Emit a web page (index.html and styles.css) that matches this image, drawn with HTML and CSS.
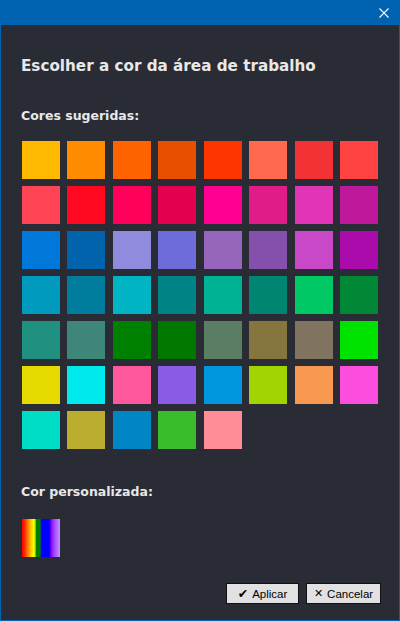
FILE: index.html
```html
<!DOCTYPE html>
<html lang="pt">
<head>
<meta charset="utf-8">
<title>Escolher a cor</title>
<link rel="stylesheet" href="styles.css">
</head>
<body>
<div class="window">
  <div class="titlebar">
    <button class="close" aria-label="Fechar">
      <svg width="10" height="10" viewBox="0 0 10 10"><path d="M0.5 0.5 L9.5 9.5 M9.5 0.5 L0.5 9.5" stroke="#fff" stroke-width="1.1" fill="none"/></svg>
    </button>
  </div>
  <div class="content">
    <h1 class="heading">Escolher a cor da área de trabalho</h1>
    <h2 class="label">Cores sugeridas:</h2>
    <div class="grid">
      <span class="sw" style="background:#FFB900"></span>
      <span class="sw" style="background:#FF8C00"></span>
      <span class="sw" style="background:#FF6300"></span>
      <span class="sw" style="background:#E85000"></span>
      <span class="sw" style="background:#FF3500"></span>
      <span class="sw" style="background:#FF6A4F"></span>
      <span class="sw" style="background:#F23234"></span>
      <span class="sw" style="background:#FF4242"></span>

      <span class="sw" style="background:#FF4455"></span>
      <span class="sw" style="background:#FF0820"></span>
      <span class="sw" style="background:#FF005A"></span>
      <span class="sw" style="background:#E2004F"></span>
      <span class="sw" style="background:#FF0093"></span>
      <span class="sw" style="background:#E11C88"></span>
      <span class="sw" style="background:#E035B6"></span>
      <span class="sw" style="background:#C0189B"></span>

      <span class="sw" style="background:#0078DA"></span>
      <span class="sw" style="background:#0063AB"></span>
      <span class="sw" style="background:#908BDD"></span>
      <span class="sw" style="background:#6E6BDA"></span>
      <span class="sw" style="background:#9566BB"></span>
      <span class="sw" style="background:#8550AC"></span>
      <span class="sw" style="background:#C948C8"></span>
      <span class="sw" style="background:#AA0BAA"></span>

      <span class="sw" style="background:#009ABF"></span>
      <span class="sw" style="background:#007C9C"></span>
      <span class="sw" style="background:#00B4C4"></span>
      <span class="sw" style="background:#008386"></span>
      <span class="sw" style="background:#00B294"></span>
      <span class="sw" style="background:#008573"></span>
      <span class="sw" style="background:#00C865"></span>
      <span class="sw" style="background:#008836"></span>

      <span class="sw" style="background:#209080"></span>
      <span class="sw" style="background:#3E8678"></span>
      <span class="sw" style="background:#008000"></span>
      <span class="sw" style="background:#007800"></span>
      <span class="sw" style="background:#5A7D64"></span>
      <span class="sw" style="background:#877540"></span>
      <span class="sw" style="background:#80735F"></span>
      <span class="sw" style="background:#00E200"></span>

      <span class="sw" style="background:#E6DA00"></span>
      <span class="sw" style="background:#00E9EC"></span>
      <span class="sw" style="background:#FF579C"></span>
      <span class="sw" style="background:#8A5CE6"></span>
      <span class="sw" style="background:#0097DF"></span>
      <span class="sw" style="background:#A1D400"></span>
      <span class="sw" style="background:#F99850"></span>
      <span class="sw" style="background:#FB4EDF"></span>

      <span class="sw" style="background:#00DDC6"></span>
      <span class="sw" style="background:#BBAD30"></span>
      <span class="sw" style="background:#0085C5"></span>
      <span class="sw" style="background:#3BBD2B"></span>
      <span class="sw" style="background:#FF8C96"></span>
    </div>
    <h2 class="label custom-label">Cor personalizada:</h2>
    <span class="rainbow"></span>
    <div class="actions">
      <button class="btn btn-apply"><span class="ico">✔</span>Aplicar</button>
      <button class="btn btn-cancel"><span class="ico x">✕</span>Cancelar</button>
    </div>
  </div>
</div>
</body>
</html>
```
FILE: styles.css
```css
html, body {
  margin: 0;
  padding: 0;
  background: #292c35;
}
.window {
  box-sizing: border-box;
  width: 400px;
  height: 621px;
  border: 1px solid #0063b1;
  border-top: 0;
  background: #292c35;
  display: flex;
  flex-direction: column;
  font-family: "DejaVu Sans", Verdana, sans-serif;
  color: #e8e8e8;
}
.titlebar {
  height: 25px;
  margin: 0 -1px;
  background: #0063b1;
  display: flex;
  justify-content: flex-end;
  align-items: center;
}
.close {
  width: 22px;
  height: 25px;
  padding: 0;
  margin-right: 5px;
  border: 0;
  background: transparent;
  display: flex;
  align-items: center;
  justify-content: center;
}
.close svg { display: block; }
.content {
  flex: 1;
  display: flex;
  flex-direction: column;
  padding: 0 20px 0 20px;
}
.heading {
  margin: 31px 0 0 0;
  font-size: 15.2px;
  font-weight: bold;
  line-height: 20px;
}
.label {
  margin: 32px 0 0 0;
  font-size: 12.5px;
  font-weight: bold;
  line-height: 16px;
}
.grid {
  margin: 17px 0 0 1px;
  width: 356px;
  display: grid;
  grid-template-columns: repeat(8, 38px);
  grid-auto-rows: 38px;
  justify-content: space-between;
  row-gap: 7px;
}
.sw { display: block; }
.label.custom-label {
  margin-top: 35px;
}
.rainbow {
  display: block;
  width: 38px;
  height: 38px;
  margin: 19px 0 0 1px;
  background: linear-gradient(to right,
    #ff0000 0%, #ff2000 6%, #ff7000 14%, #ffa800 20%, #ffe000 26%, #ffff00 32%,
    #a0d000 35%, #008000 38%, #008000 48%, #0000ff 50%, #0000ff 72%,
    #8000ff 76%, #a040ff 84%, #c890ff 100%);
}
.actions {
  margin-top: auto;
  margin-bottom: 16px;
  margin-right: -2px;
  display: flex;
  justify-content: flex-end;
  gap: 7px;
}
.btn {
  box-sizing: border-box;
  height: 21px;
  padding: 0;
  border: 1px solid #111;
  background: #e1e1e1;
  color: #000;
  font-family: "Liberation Sans", Arial, sans-serif;
  font-size: 11.5px;
  display: flex;
  align-items: center;
  justify-content: center;
}
.btn-apply { width: 73px; }
.btn-cancel { width: 75px; }
.ico {
  font-family: "DejaVu Sans", sans-serif;
  font-size: 12.5px;
  margin-right: 4px;
}
.ico.x { font-size: 11px; font-weight: bold; }
```
